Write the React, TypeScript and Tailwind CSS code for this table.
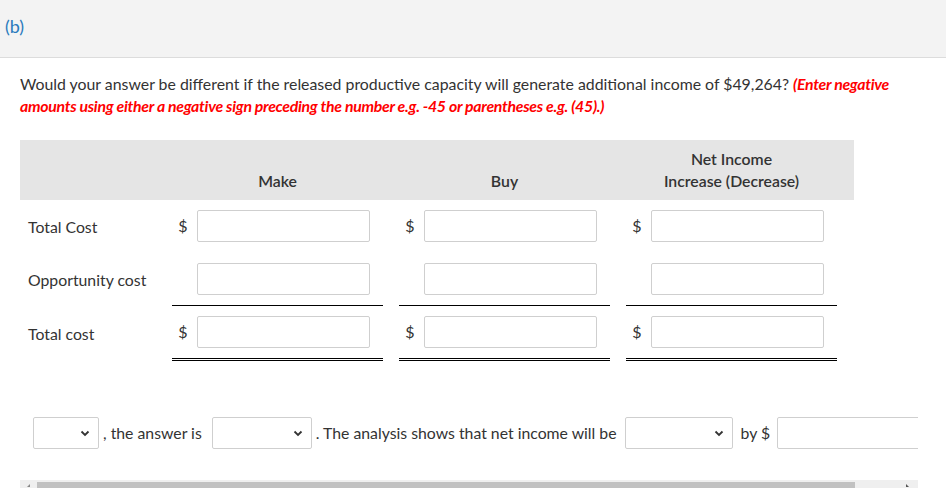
import React from "react";

const Chevron = () => (
  <svg width="10" height="7" viewBox="0 0 10 7" className="shrink-0">
    <path d="M1.5 1.5 L5 5 L8.5 1.5" fill="none" stroke="#333" strokeWidth="1.8" />
  </svg>
);

const Input = () => (
  <div className="w-[173px] h-[32px] border border-[#cfcfcf] rounded-[2px] bg-white" />
);

function Cell({ dollar, line }: { dollar: boolean; line?: "single" | "double" }) {
  const lineCls =
    line === "single"
      ? "border-b border-black"
      : line === "double"
      ? "border-b-[3px] border-double border-black"
      : "border-b border-transparent";
  return (
    <div className={`w-[211px] flex items-center pt-[10px] pb-[10px] ${lineCls}`}>
      <span className="w-[22px] text-center text-[16px] text-[#333]">{dollar ? "$" : ""}</span>
      <div className="w-[3px]" />
      <Input />
    </div>
  );
}

function Row({ label, dollar, line }: { label: string; dollar: boolean; line?: "single" | "double" }) {
  return (
    <div className="flex items-stretch">
      <div className="w-[152px] pl-[8px] flex items-center text-[15.8px] text-[#333]">{label}</div>
      <Cell dollar={dollar} line={line} />
      <div className="w-[16px]" />
      <Cell dollar={dollar} line={line} />
      <div className="w-[16px]" />
      <Cell dollar={dollar} line={line} />
    </div>
  );
}

function Select({ w }: { w: number }) {
  return (
    <div
      className="h-[32px] border border-[#cfcfcf] rounded-[2px] bg-white flex items-center justify-end pr-[8px] shrink-0"
      style={{ width: w }}
    >
      <Chevron />
    </div>
  );
}

export default function App() {
  return (
    <div className="w-[946px] h-[489px] overflow-hidden bg-white" style={{ fontFamily: "Lato, 'Noto Sans', sans-serif" }}>
      <div className="h-[58px] bg-[#f3f3f3] border-b border-[#dcdcdc] pl-[5px] pt-[13px]">
        <span className="text-[18px] text-[#2a7bbd] leading-[26px]">(b)</span>
      </div>
      <div className="pl-[20px]">
        <p className="mt-[15px] text-[15.85px] leading-[22px] text-[#333] w-[900px]">
          Would your answer be different if the released productive capacity will generate additional income of $49,264?{" "}
          <span className="text-[#ff0000] font-bold italic tracking-[-0.3px]">
            (Enter negative amounts using either a negative sign preceding the number e.g. -45 or parentheses e.g. (45).)
          </span>
        </p>
        <div className="mt-[23px] w-[834px]">
          <div className="flex h-[60px] bg-[#e5e5e5] text-[15.8px] font-semibold text-[#333] leading-[22px]">
            <div className="w-[152px]" />
            <div className="w-[211px] flex items-end justify-center pb-[8px]">Make</div>
            <div className="w-[16px]" />
            <div className="w-[211px] flex items-end justify-center pb-[8px]">Buy</div>
            <div className="w-[16px]" />
            <div className="w-[211px] flex items-end justify-center pb-[8px] text-center">
              Net Income
              <br />
              Increase (Decrease)
            </div>
          </div>
          <Row label="Total Cost" dollar={true} />
          <Row label="Opportunity cost" dollar={false} line="single" />
          <Row label="Total cost" dollar={true} line="double" />
        </div>
        <div className="w-[898px] overflow-hidden mt-[56px]">
          <div className="flex items-center pl-[13px] text-[15.8px] text-[#333] whitespace-nowrap w-[1000px]">
            <Select w={66} />
            <span className="ml-[4px] mr-[10px]">, the answer is</span>
            <Select w={100} />
            <span className="ml-[4px] mr-[8px]">. The analysis shows that net income will be</span>
            <Select w={108} />
            <span className="ml-[8px] mr-[7px]">by $</span>
            <div className="w-[200px] h-[32px] border border-[#cfcfcf] rounded-[2px] bg-white shrink-0" />
          </div>
        </div>
        <div className="mt-[31px] w-[898px] h-[8px] bg-[#efefef] relative">
          <div className="absolute left-[17px] top-[2px] w-[818px] h-[6px] bg-[#c1c1c1]" />
          <div className="absolute left-[7px] top-[4px] w-0 h-0 border-l-[3px] border-l-transparent border-b-[3px] border-b-[#888]" />
          <div className="absolute right-[9px] top-[4px] w-0 h-0 border-r-[3px] border-r-transparent border-b-[3px] border-b-[#555]" />
        </div>
      </div>
    </div>
  );
}
